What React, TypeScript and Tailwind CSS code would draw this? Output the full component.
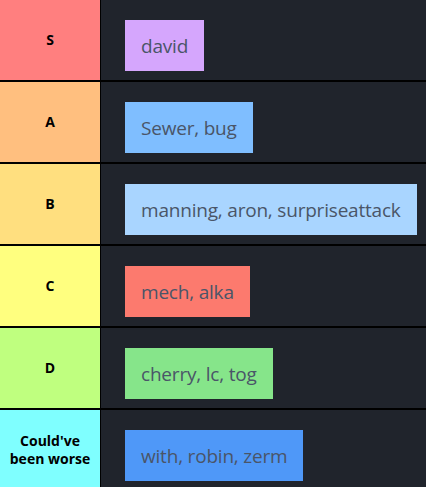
import React from "react";

const tiers = [
  { label: "S", color: "bg-[#ff7f7f]", chip: "bg-[#d5a6fd]", text: "david" },
  { label: "A", color: "bg-[#ffbf7f]", chip: "bg-[#7fbeff]", text: "Sewer, bug" },
  { label: "B", color: "bg-[#ffdf7f]", chip: "bg-[#a9d5ff]", text: "manning, aron, surpriseattack" },
  { label: "C", color: "bg-[#ffff7f]", chip: "bg-[#fc7a6e]", text: "mech, alka" },
  { label: "D", color: "bg-[#bfff7f]", chip: "bg-[#86e58a]", text: "cherry, lc, tog" },
  { label: "Could've been worse", color: "bg-[#7fffff]", chip: "bg-[#4f98f8]", text: "with, robin, zerm" },
];

export default function App() {
  return (
    <div className="w-[426px] h-[487px] overflow-hidden bg-black" style={{ fontFamily: "'Open Sans', 'Noto Sans', sans-serif" }}>
      {tiers.map((t, i) => (
        <div key={t.label} className={`flex h-[80px] ${i > 0 ? "mt-[2px]" : ""}`}>
          <div className={`w-[100px] shrink-0 flex items-center justify-center text-center text-[14px] leading-[18px] font-bold text-black ${t.color}`}>
            <span className="px-2">{t.label}</span>
          </div>
          <div className="ml-px flex-1 bg-[#20242c] pl-[24px] pt-[20px]">
            <div className={`inline-flex h-[51px] items-center px-[16px] pt-[1px] text-[19px] tracking-[-0.2px] text-[#4a5568] ${t.chip}`}>
              {t.text}
            </div>
          </div>
        </div>
      ))}
    </div>
  );
}
